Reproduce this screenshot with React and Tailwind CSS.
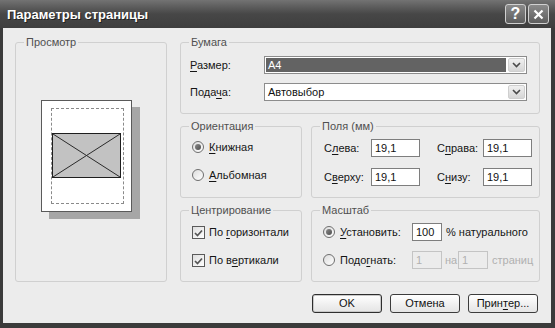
import React from "react";

function Group({ label, className, children }) {
  return (
    <div className={"relative border border-[#d0d0d0] rounded-[3px] " + className}>
      <span className="absolute -top-[7px] left-[8px] px-[2px] bg-[#ececec] text-[#505050] leading-[13px]">
        {label}
      </span>
      {children}
    </div>
  );
}

function U({ children }) {
  return <span className="underline underline-offset-[2px]">{children}</span>;
}

function Chevron() {
  return (
    <svg width="9" height="6" viewBox="0 0 9 6">
      <path d="M1 1 L4.5 4.5 L8 1" fill="none" stroke="#4a4a4a" strokeWidth="1.6" />
    </svg>
  );
}

function Combo({ selected, text }) {
  return (
    <div className="w-[263px] h-[18px] border border-[#8c8c8c] bg-white flex items-stretch p-[1px]">
      <div
        className={
          selected
            ? "flex-1 bg-[#636363] text-white pl-[2px] flex items-center leading-none"
            : "flex-1 text-[#111] pl-[2px] flex items-center leading-none"
        }
      >
        {text}
      </div>
      <div className="w-[17px] ml-[2px] rounded-[2px] border border-[#cfcfcf] bg-linear-to-b from-[#f0f0f0] to-[#d6d6d6] flex items-center justify-center">
        <Chevron />
      </div>
    </div>
  );
}

function Radio({ checked }) {
  return (
    <div className="w-[12px] h-[12px] rounded-full border border-[#6e6e6e] bg-linear-to-br from-[#dcdcdc] to-white flex items-center justify-center shrink-0">
      {checked && <div className="w-[6px] h-[6px] rounded-full bg-linear-to-br from-[#8a8a8a] to-[#4e4e4e]" />}
    </div>
  );
}

function Check() {
  return (
    <div className="w-[13px] h-[13px] border border-[#5a5a5a] bg-linear-to-br from-[#dedede] to-white flex items-center justify-center shrink-0">
      <svg width="9" height="8" viewBox="0 0 9 8">
        <path d="M1 4 L3.5 6.5 L8 1.5" fill="none" stroke="#555" strokeWidth="1.7" />
      </svg>
    </div>
  );
}

function Input({ value, w = "w-[49px]", disabled }) {
  return (
    <div
      className={
        (disabled
          ? "border-[#c4c4c4] text-[#b0b0b0] bg-[#ececec] "
          : "border-[#7e7e7e] text-[#111] bg-white ") +
        w +
        " h-[18px] border pl-[3px] flex items-center leading-none shrink-0"
      }
    >
      {value}
    </div>
  );
}

function Btn({ children, def }) {
  return (
    <div
      className={
        (def ? "border-[#2e2e2e] shadow-[inset_0_0_0_1px_#c8c8c8] " : "border-[#3c3c3c] ") +
        "w-[70px] h-[19px] border rounded-[3px] bg-linear-to-b from-white to-[#e4e4e4] flex items-center justify-center leading-none text-[#111]"
      }
    >
      {children}
    </div>
  );
}

export default function App() {
  return (
    <div className="w-[555px] h-[328px] flex flex-col bg-[#3b3b3b] font-['Liberation_Sans',Arial,sans-serif] text-[11px] text-[#151515] overflow-hidden">
      {/* Title bar */}
      <div className="h-[28px] shrink-0 flex items-center pl-[7px] pr-[6px] bg-linear-to-b from-[#737373] via-[#474747] to-[#3e3e3e]">
        <div className="flex-1 text-white font-bold text-[13px] leading-none [text-shadow:1px_1px_0_#222]">
          Параметры страницы
        </div>
        <div className="flex gap-[2px]">
          <div className="w-[21px] h-[20px] rounded-[3px] border border-[#d0d0d0] bg-linear-to-b from-[#8a8a8a] to-[#5e5e5e] flex items-center justify-center text-white font-bold text-[16px] leading-none">
            ?
          </div>
          <div className="w-[21px] h-[20px] rounded-[3px] border border-[#d0d0d0] bg-linear-to-b from-[#8a8a8a] to-[#5e5e5e] flex items-center justify-center">
            <svg width="11" height="11" viewBox="0 0 11 11">
              <path d="M1.5 1.5 L9.5 9.5 M9.5 1.5 L1.5 9.5" stroke="white" strokeWidth="2.2" />
            </svg>
          </div>
        </div>
      </div>

      {/* Body */}
      <div className="flex-1 ml-[3px] mr-[4px] mb-[5px] bg-[#ececec] pt-[14px] pl-[12px] flex flex-col">
        <div className="flex gap-[13px]">
          {/* Preview */}
          <Group label="Просмотр" className="w-[152px] h-[240px] pl-[25px] pt-[57px]">
            <div className="w-[91px] h-[112px] bg-white border border-[#5a5a5a] shadow-[8px_7px_0_#a6a6a6] pt-[7px] pl-[9px]">
              <div className="w-[73px] h-[96px] border border-dashed border-[#8a8a8a] pt-[24px]">
                <div className="w-[69px] h-[45px] border border-[#1e1e1e] bg-[#c2c2c2]">
                  <svg width="67" height="43" viewBox="0 0 67 43" className="block">
                    <path d="M0 0 L67 43 M67 0 L0 43" stroke="#2a2a2a" strokeWidth="1" />
                  </svg>
                </div>
              </div>
            </div>
          </Group>

          {/* Right column */}
          <div className="w-[360px] flex flex-col gap-[12px]">
            <Group label="Бумага" className="h-[72px] pt-[13px] pl-[9px] flex flex-col gap-[9px]">
              <div className="flex items-center">
                <div className="w-[74px]">
                  <U>Р</U>азмер:
                </div>
                <Combo selected text="A4" />
              </div>
              <div className="flex items-center">
                <div className="w-[74px]">
                  Пода<U>ч</U>а:
                </div>
                <Combo text="Автовыбор" />
              </div>
            </Group>

            <div className="flex gap-[9px]">
              <Group label="Ориентация" className="w-[122px] h-[72px] pt-[14px] pl-[11px] flex flex-col gap-[16px]">
                <div className="flex items-center gap-[5px] h-[12px]">
                  <Radio checked />
                  <span>
                    <U>К</U>нижная
                  </span>
                </div>
                <div className="flex items-center gap-[5px] h-[12px]">
                  <Radio />
                  <span>
                    <U>А</U>льбомная
                  </span>
                </div>
              </Group>

              <Group label="Поля (мм)" className="w-[229px] h-[72px] pt-[12px] pl-[12px] flex flex-col gap-[11px]">
                <div className="flex items-center">
                  <div className="w-[47px]">
                    С<U>л</U>ева:
                  </div>
                  <Input value="19,1" />
                  <div className="w-[46px] ml-[17px]">
                    С<U>п</U>рава:
                  </div>
                  <Input value="19,1" />
                </div>
                <div className="flex items-center">
                  <div className="w-[47px]">
                    С<U>в</U>ерху:
                  </div>
                  <Input value="19,1" />
                  <div className="w-[46px] ml-[17px]">
                    С<U>н</U>изу:
                  </div>
                  <Input value="19,1" />
                </div>
              </Group>
            </div>

            <div className="flex gap-[9px]">
              <Group label="Центрирование" className="w-[122px] h-[72px] pt-[15px] pl-[11px] flex flex-col gap-[15px]">
                <div className="flex items-center gap-[4px] h-[13px]">
                  <Check />
                  <span className="whitespace-nowrap">
                    По <U>г</U>оризонтали
                  </span>
                </div>
                <div className="flex items-center gap-[4px] h-[13px]">
                  <Check />
                  <span className="whitespace-nowrap">
                    По в<U>е</U>ртикали
                  </span>
                </div>
              </Group>

              <Group label="Масштаб" className="w-[229px] h-[72px] pt-[12px] pl-[11px] flex flex-col gap-[10px]">
                <div className="flex items-center h-[18px]">
                  <Radio checked />
                  <div className="w-[72px] ml-[5px]">
                    <U>У</U>становить:
                  </div>
                  <Input value="100" w="w-[30px]" />
                  <span className="ml-[4px] whitespace-nowrap">% натурального</span>
                </div>
                <div className="flex items-center h-[18px]">
                  <Radio />
                  <div className="w-[72px] ml-[5px]">
                    Подо<U>г</U>нать:
                  </div>
                  <Input value="1" w="w-[30px]" disabled />
                  <span className="ml-[3px] w-[13px] text-[#b0b0b0]">на</span>
                  <Input value="1" w="w-[30px]" disabled />
                  <span className="ml-[4px] text-[#b0b0b0]">страниц</span>
                </div>
              </Group>
            </div>
          </div>
        </div>

        <div className="mt-[12px] flex justify-end gap-[8px] pr-[13px]">
          <Btn def>OK</Btn>
          <Btn>Отмена</Btn>
          <Btn>
            Прин<U>т</U>ер...
          </Btn>
        </div>
      </div>
    </div>
  );
}
